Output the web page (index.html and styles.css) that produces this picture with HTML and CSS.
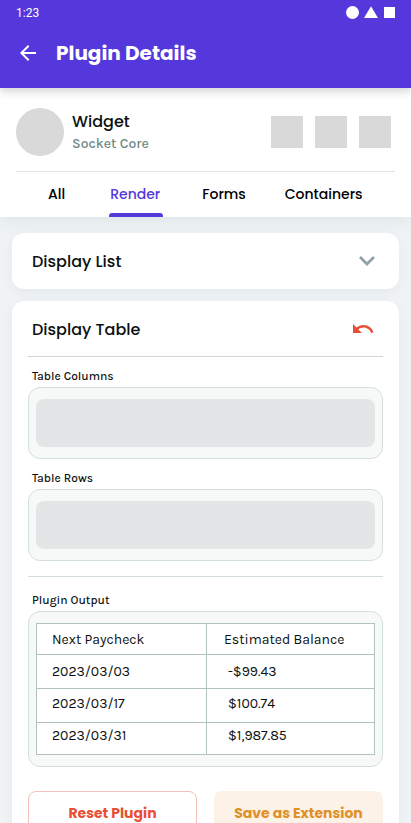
FILE: index.html
```html
<!DOCTYPE html>
<html lang="en">
<head>
<meta charset="utf-8">
<title>Plugin Details</title>
<link rel="stylesheet" href="styles.css">
</head>
<body>
<div class="screen">
  <header class="app-bar">
    <div class="status">
      <span class="time">1:23</span>
      <svg class="status-icons" width="50" height="14" viewBox="0 0 50 14" fill="#fff"><circle cx="7.5" cy="6.5" r="6.5"/><path d="M26 0.3 33 12H19z"/><path d="M39 1h11v11H39z"/></svg>
    </div>
    <div class="title-row">
      <svg width="16" height="16" viewBox="0 0 16 16" fill="#fff"><path d="M16 7H3.83l5.59-5.59L8 0 0 8l8 8 1.41-1.41L3.83 9H16z"/></svg>
      <h1>Plugin Details</h1>
    </div>
  </header>
  <section class="profile">
    <div class="identity">
      <div class="avatar"></div>
      <div class="names">
        <div class="name">Widget</div>
        <div class="sub">Socket Core</div>
      </div>
      <div class="actions"><i></i><i></i><i></i></div>
    </div>
    <nav class="tabs">
      <a class="tab">All</a>
      <a class="tab active">Render</a>
      <a class="tab">Forms</a>
      <a class="tab">Containers</a>
    </nav>
  </section>
  <main>
    <section class="card">
      <div class="card-head">
        <h2>Display List</h2>
        <svg class="chevron" width="16" height="10" viewBox="0 0 16 10" fill="none" stroke="#8fa3a6" stroke-width="2.8"><path d="M1 1l7 7 7-7"/></svg>
      </div>
    </section>
    <section class="card">
      <div class="card-head">
        <h2>Display Table</h2>
        <svg class="undo" width="21" height="9" viewBox="0 0 21 9" fill="#e94f37"><path d="M10.5 1C7.85 1 5.45 2 3.6 3.6L0 0v9h9L5.38 5.38C6.77 4.22 8.54 3.5 10.5 3.5c3.54 0 6.55 2.31 7.6 5.5l2.37-.78C19.08 4.03 15.15 1 10.5 1z"/></svg>
      </div>
      <div class="card-body">
        <div class="label">Table Columns</div>
        <div class="well"><div class="slot"></div></div>
        <div class="label second">Table Rows</div>
        <div class="well"><div class="slot"></div></div>
        <div class="output">
          <div class="label">Plugin Output</div>
          <div class="well">
            <table>
              <colgroup><col class="dates"><col></colgroup>
              <tr class="r1"><td>Next Paycheck</td><td>Estimated Balance</td></tr>
              <tr class="r2"><td>2023/03/03</td><td>-$99.43</td></tr>
              <tr class="r3"><td>2023/03/17</td><td>$100.74</td></tr>
              <tr class="r4"><td>2023/03/31</td><td>$1,987.85</td></tr>
            </table>
          </div>
        </div>
        <div class="buttons">
          <button class="reset">Reset Plugin</button>
          <button class="save">Save as Extension</button>
        </div>
      </div>
    </section>
  </main>
</div>
</body>
</html>
```
FILE: styles.css
```css
* { box-sizing: border-box; }
body { margin: 0; background: #eff3f5; color: #0c1010; font-family: Karla, "Noto Sans", sans-serif; }
.screen { height: 823px; overflow: hidden; display: flex; flex-direction: column; }
h1, h2 { margin: 0; font-family: Poppins, Inter, sans-serif; }
svg { display: block; flex: none; }

.app-bar { flex: none; height: 88px; background: #5438dc; color: #fff; box-shadow: 0 4px 8px rgba(0,0,0,.16); position: relative; z-index: 2; }
.status { display: flex; justify-content: space-between; padding: 6px 16px 0; height: 26px; }
.time { font: 12px/14px Roboto, sans-serif; }
.title-row { display: flex; align-items: center; gap: 20px; padding-left: 20px; height: 54px; }
h1 { font-size: 20px; line-height: 30px; font-weight: 700; }

.profile { flex: none; height: 129px; background: #fff; padding: 0 16px; box-shadow: 0 4px 16px rgba(40,60,60,.08); }
.identity { height: 84px; display: flex; align-items: center; padding: 0 4px 0 0; border-bottom: 1px solid #e1e4e5; }
.avatar { width: 48px; height: 48px; border-radius: 50%; background: #d9d9d9; margin-top: 5px; }
.names { margin: 4px auto 0 8px; }
.name { font: 500 16px/24px Poppins, Inter, sans-serif; }
.sub { font-size: 14px; line-height: 20px; font-weight: 500; color: #6b8684; }
.actions { display: flex; gap: 12px; margin-top: 5px; }
.actions i { width: 32px; height: 32px; background: #d9d9d9; }
.tabs { display: flex; height: 45px; padding-left: 32px; font: 500 14px/45px Poppins, Inter, sans-serif; color: #000; }
.tab { position: relative; }
.tab + .tab { margin-left: 42px; }
.tab:nth-child(2) { margin-left: 45px; }
.tab:nth-child(4) { margin-left: 39px; }
.active { color: #5438dc; }
.active::after { content: ""; position: absolute; left: -1px; bottom: 0; width: 54px; height: 4px; background: #5438dc; border-radius: 3px 3px 0 0; }

main { padding: 16px 12px 0; display: flex; flex-direction: column; gap: 12px; }
.card { background: #fff; border-radius: 12px; box-shadow: 0 4px 12px rgba(40,60,60,.05); }
.card-head { height: 56px; padding: 0 24px 0 20px; display: flex; align-items: center; justify-content: space-between; }
h2 { font-size: 16px; line-height: 24px; font-weight: 500; padding-top: 2px; }
.undo { margin: 0 1px 2px 0; }
.card-body { margin: -1px 16px 0; border-top: 1px solid #d2d6d8; height: 500px; }
.label { font-size: 12px; line-height: 14px; font-weight: 500; margin: 12px 4px 4px; }
.second { margin-top: 12px; }
.well { border: 1px solid #d3dfdd; border-radius: 12px; background: #f7f9f8; padding: 11px 7px; }
.slot { height: 48px; border-radius: 8px; background: #e2e6e7; }
.output { margin-top: 15px; border-top: 1px solid #d2dddb; padding-top: 4px; }
.output .label { margin-top: 12px; }

table { width: 339px; height: 132px; table-layout: fixed; border-collapse: collapse; background: #fff; font-size: 14px; line-height: 16px; }
.dates { width: 170px; }
td { border: 1px solid #b0c2c2; padding: 0 0 0 15px; vertical-align: top; }
td + td { padding-left: 21px; }
.r1 td { height: 31px; padding-top: 8px; }
.r1 td + td { padding-left: 17px; }
.r2 td { height: 34px; padding-top: 9px; }
.r3 td { height: 34px; padding-top: 7px; }
.r4 td { height: 32px; padding-top: 5px; }

.buttons { display: flex; gap: 17px; margin-top: 24px; }
button { width: 169px; height: 44px; border-radius: 8px; padding: 0; font: 700 14px/21px Poppins, Inter, sans-serif; }
.reset { border: 1px solid #f4c0b9; background: #fff; color: #e94f37; }
.save { border: 0; background: #fcf2e7; color: #e09026; }
```
